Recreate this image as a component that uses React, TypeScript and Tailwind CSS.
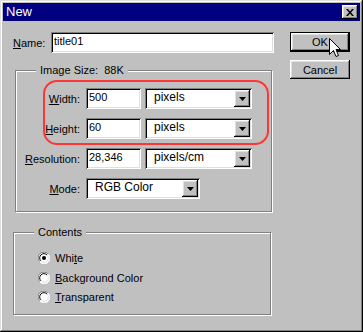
import React from "react";

const raised =
  "shadow-[inset_-1px_-1px_#000,inset_1px_1px_#fff,inset_-2px_-2px_#808080,inset_2px_2px_#dfdfdf]";
const sunken =
  "shadow-[inset_1px_1px_#808080,inset_-1px_-1px_#fff,inset_2px_2px_#000,inset_-2px_-2px_#dfdfdf]";

function U({ children }: { children: React.ReactNode }) {
  return <span className="underline underline-offset-[1px] decoration-1">{children}</span>;
}

function Input({ w, value }: { w: string; value: string }) {
  return (
    <div className={`${w} h-[21px] bg-white ${sunken} pt-[2px] pl-[3px] leading-[14px] text-black`}>
      {value}
    </div>
  );
}

function Select({ w, value }: { w: string; value: string }) {
  return (
    <div className={`${w} h-[21px] bg-white ${sunken} flex items-start justify-between p-[2px]`}>
      <span className="pl-[7px] leading-[15px] text-[12px] text-black">{value}</span>
      <div className={`w-[16px] h-[17px] bg-[#c0c0c0] ${raised} flex items-center justify-center`}>
        <svg width="7" height="4" viewBox="0 0 7 4">
          <polygon points="0,0 7,0 3.5,4" fill="#000" />
        </svg>
      </div>
    </div>
  );
}

function Radio({ checked }: { checked?: boolean }) {
  return (
    <svg width="12" height="12" viewBox="0 0 12 12" className="shrink-0">
      <circle cx="6" cy="6" r="5.5" fill="#fff" />
      <path d="M10 2 A5.5 5.5 0 0 0 1.5 9.5" stroke="#808080" strokeWidth="1" fill="none" />
      <path d="M9 3 A4.2 4.2 0 0 0 2.8 8.8" stroke="#000" strokeWidth="1" fill="none" />
      <path d="M2 10 A5.5 5.5 0 0 0 10.5 2.5" stroke="#fff" strokeWidth="1" fill="none" />
      <path d="M3 9 A4.2 4.2 0 0 0 9.2 3.2" stroke="#dfdfdf" strokeWidth="1" fill="none" />
      {checked && <circle cx="6" cy="6" r="2" fill="#000" />}
    </svg>
  );
}

const etched = "border border-[#808080] shadow-[inset_1px_1px_#fff,1px_1px_#fff]";

export default function App() {
  return (
    <div
      className="w-[363px] h-[332px] bg-[#c0c0c0] p-[3px] flex flex-col text-[11px] text-black shadow-[inset_-1px_-1px_#000,inset_1px_1px_#dfdfdf,inset_-2px_-2px_#808080,inset_2px_2px_#fff] relative"
      style={{ fontFamily: '"Liberation Sans", Arial, sans-serif' }}
    >
      {/* Title bar */}
      <div className="h-[18px] bg-[#000080] flex items-center justify-between pl-[3px] pr-[2px]">
        <span className="text-white text-[13px] leading-[16px]">New</span>
        <div className={`w-[16px] h-[14px] bg-[#c0c0c0] ${raised} flex items-center justify-center`}>
          <svg width="8" height="7" viewBox="0 0 8 7">
            <path d="M0 0h2l2 2.5L6 0h2L5 3.5 8 7H6L4 4.5 2 7H0l3-3.5z" fill="#000" />
          </svg>
        </div>
      </div>

      {/* Body */}
      <div className="flex pl-[10px] pt-[11px]">
        {/* Left column */}
        <div className="w-[261px] flex flex-col">
          <div className="flex items-center h-[21px]">
            <span className="w-[38px] leading-[14px]">
              <U>N</U>ame:
            </span>
            <Input w="w-[223px]" value="title01" />
          </div>

          {/* Image Size group */}
          <div className={`relative mt-[17px] ml-[2px] w-[257px] h-[142px] ${etched} pt-[17px]`}>
            <span className="absolute -top-[8px] left-[20px] px-[4px] bg-[#c0c0c0] leading-[14px]">
              Image Size:&nbsp;&nbsp;88K
            </span>
            <div className="flex flex-col gap-[9px]">
              <div className="flex items-center gap-[6px]">
                <span className="w-[64px] text-right leading-[14px]">
                  <U>W</U>idth:
                </span>
                <div className="flex gap-[4px]">
                  <Input w="w-[55px]" value="500" />
                  <Select w="w-[107px]" value="pixels" />
                </div>
              </div>
              <div className="flex items-center gap-[6px]">
                <span className="w-[64px] text-right leading-[14px]">
                  <U>H</U>eight:
                </span>
                <div className="flex gap-[4px]">
                  <Input w="w-[55px]" value="60" />
                  <Select w="w-[107px]" value="pixels" />
                </div>
              </div>
              <div className="flex items-center gap-[6px]">
                <span className="w-[64px] text-right leading-[14px]">
                  <U>R</U>esolution:
                </span>
                <div className="flex gap-[4px]">
                  <Input w="w-[55px]" value="28,346" />
                  <Select w="w-[107px]" value="pixels/cm" />
                </div>
              </div>
              <div className="flex items-center gap-[6px]">
                <span className="w-[64px] text-right leading-[14px]">
                  <U>M</U>ode:
                </span>
                <Select w="w-[114px]" value="RGB Color" />
              </div>
            </div>
            {/* red highlight annotation */}
            <div className="absolute left-[27px] top-[9px] w-[226px] h-[65px] border-[2px] border-[#ff3636] rounded-[14px] pointer-events-none" />
          </div>

          {/* Contents group */}
          <div className={`relative mt-[20px] w-[258px] h-[83px] ${etched} pt-[15px] pl-[24px]`}>
            <span className="absolute -top-[8px] left-[20px] px-[4px] bg-[#c0c0c0] leading-[14px]">
              Contents
            </span>
            <div className="flex flex-col">
              <div className="flex items-center gap-[5px] h-[20px]">
                <Radio checked />
                <span className="leading-[14px]">
                  Whi<U>t</U>e
                </span>
              </div>
              <div className="flex items-center gap-[5px] h-[19px]">
                <Radio />
                <span className="leading-[14px]">
                  <U>B</U>ackground Color
                </span>
              </div>
              <div className="flex items-center gap-[5px] h-[20px]">
                <Radio />
                <span className="leading-[14px]">
                  <U>T</U>ransparent
                </span>
              </div>
            </div>
          </div>
        </div>

        {/* Right column */}
        <div className="ml-[16px] flex flex-col gap-[8px]">
          <div className="w-[60px] h-[20px] border border-black bg-[#c0c0c0]">
            <div className={`w-full h-full ${raised} flex items-center justify-center leading-[14px]`}>OK</div>
          </div>
          <div className={`w-[60px] h-[19px] bg-[#c0c0c0] ${raised} flex items-center justify-center leading-[14px]`}>
            Cancel
          </div>
        </div>
      </div>

      {/* Mouse cursor */}
      <svg
        className="absolute left-[329px] top-[38px] pointer-events-none"
        width="12"
        height="20"
        viewBox="0 0 12 20"
      >
        <path
          d="M0.5 0.5 L0.5 16.5 L4.5 12.5 L7 18.5 L9.5 17.5 L7 11.5 L11.5 11.5 Z"
          fill="#fff"
          stroke="#000"
          strokeWidth="1"
          strokeLinejoin="miter"
        />
      </svg>
    </div>
  );
}
